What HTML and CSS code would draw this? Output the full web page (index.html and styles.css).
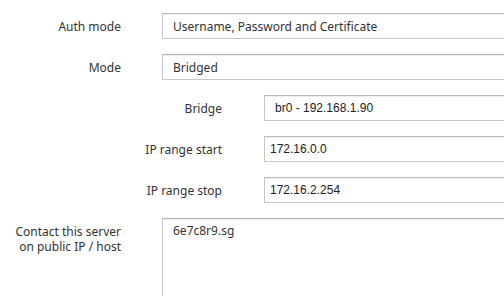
FILE: index.html
```html
<!DOCTYPE html>
<html lang="en">
  <head>
    <meta charset="UTF-8">
    <title>Server settings</title>
    <link rel="stylesheet" href="styles.css">
  </head>
  <body>
    <form class="settings">
      <div class="field">
        <label class="field-label">Auth mode</label>
        <div class="field-box">Username, Password and Certificate</div>
      </div>
      <div class="field">
        <label class="field-label">Mode</label>
        <div class="field-box">Bridged</div>
      </div>

      <div class="sub-fields">
        <div class="field">
          <label class="field-label">Bridge</label>
          <div class="field-box plain select-box">br0 - 192.168.1.90</div>
        </div>
        <div class="field">
          <label class="field-label">IP range start</label>
          <input class="field-box plain" type="text" value="172.16.0.0">
        </div>
        <div class="field">
          <label class="field-label">IP range stop</label>
          <input class="field-box plain" type="text" value="172.16.2.254">
        </div>
      </div>

      <div class="field field-top">
        <label class="field-label">
          <span class="label-line">Contact this server</span>
          <span class="label-line">on public IP / host</span>
        </label>
        <textarea class="field-box area">6e7c8r9.sg</textarea>
      </div>
    </form>
  </body>
</html>
```

FILE: styles.css
```css
body {
	margin: 0;
	padding: 0;
	background: #fff;
	overflow: hidden;
	font-family: "Noto Sans", sans-serif;
	font-size: 12px;
	color: #3a3a3a;
}
.settings {
	padding-top: 13px;
	display: flex;
	flex-direction: column;
	gap: 15px;
}
.sub-fields {
	display: flex;
	flex-direction: column;
	gap: 15px;
	padding-left: 101px;
}
.field {
	display: grid;
	grid-template-columns: 121px 420px;
	column-gap: 41px;
	align-items: center;
}
.sub-fields .field {
	column-gap: 42px;
}
.field-top {
	align-items: start;
}
.field-label {
	text-align: right;
	color: #333;
}
.field-top .field-label {
	padding-top: 6px;
	display: flex;
	flex-direction: column;
	gap: 0;
}
.label-line {
	display: block;
	line-height: 15px;
	white-space: nowrap;
}
.field-box {
	box-sizing: border-box;
	height: 26px;
	line-height: 25px;
	padding: 0 10px;
	border: 1px solid #c6c6c6;
	border-top-color: #b8b8b8;
	box-shadow: inset 0 1px 1px #eee;
	background: #fff;
	font-family: "Noto Sans", sans-serif;
	font-size: 12px;
	color: #333;
	margin: 0;
}
.plain {
	font-family: "Liberation Sans", Arial, sans-serif;
	font-size: 12px;
	padding: 0 5px;
	color: #222;
	outline: none;
}
.select-box {
	padding-left: 10px;
}
.area {
	height: 100px;
	padding: 4px 10px;
	line-height: 16px;
	resize: none;
	outline: none;
}
```
